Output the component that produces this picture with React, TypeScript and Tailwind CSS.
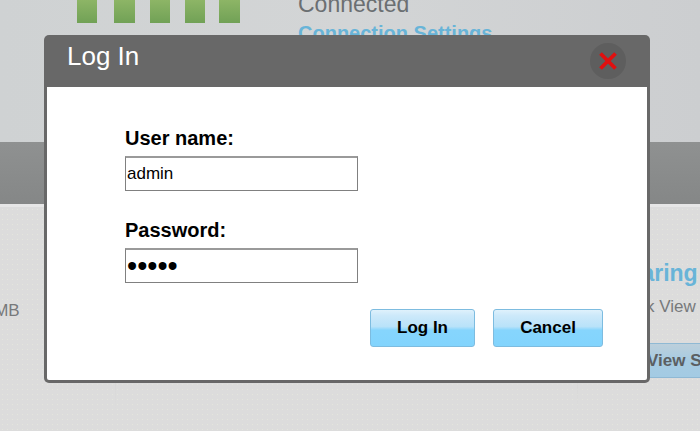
import React from "react";

const bars = [
  "w-[20px] mr-[17px]",
  "w-[21px] mr-[15px]",
  "w-[20px] mr-[15px]",
  "w-[20px] mr-[14px]",
  "w-[21px]",
];

const btn =
  "h-[38px] rounded-[3px] border border-[#7dbce0] bg-[linear-gradient(to_bottom,#dff1fc_0%,#cde9fa_15%,#b9e2f9_46%,#86d5fd_56%,#82d4fd_100%)] text-[17px] font-bold text-black";

export default function App() {
  return (
    <div className="relative w-[700px] h-[431px] overflow-hidden bg-[#dcdcdc] font-['Liberation_Sans',Arial,sans-serif]">
      <div className="flex flex-col h-full">
        <div className="h-[142px] shrink-0 flex bg-gradient-to-r from-[#cfd2d3] via-[#d3d5d6] to-[#ccced0]">
          <div className="ml-[77px] flex h-[23px]">
            {bars.map((w, i) => (
              <div key={i} className={`${w} h-[23px] bg-gradient-to-b from-[#8db566] to-[#71a156]`} />
            ))}
          </div>
          <div className="ml-[58px] -mt-[9px]">
            <div className="text-[23px] leading-[26px] text-[#6b6f72]">Connected</div>
            <div className="mt-[5px] text-[20px] leading-[23px] font-bold text-[#68b4d8] whitespace-nowrap">Connection Settings</div>
          </div>
        </div>
        <div className="h-[62px] shrink-0 bg-gradient-to-b from-[#8f9191] to-[#858787]" />
        <div className="h-[3px] shrink-0 bg-[#e6e6e6]" />
        <div className="flex-1 flex bg-[radial-gradient(#e4e6dc_0.7px,transparent_0.9px)] bg-[size:5px_5px]">
          <div className="w-[115px] shrink-0 pt-[94px] text-[17px] leading-[20px] text-[#77797b] overflow-hidden">
            <div className="-ml-[20px] whitespace-nowrap">1 MB</div>
          </div>
          <div className="w-px h-[205px] shrink-0 bg-gradient-to-b from-[#cfcfcf] via-[#cfcfcf] to-transparent" />
          <div className="w-[461px] shrink-0" />
          <div className="w-px h-[208px] shrink-0 bg-gradient-to-b from-[#cfcfcf] via-[#cfcfcf] to-transparent" />
          <div className="flex-1 min-w-0 overflow-hidden whitespace-nowrap">
            <div className="pt-[52px] ml-[34px] text-[23px] leading-[28px] font-bold text-[#68b4d8]">Sharing</div>
            <div className="mt-[10px] ml-[68px] text-[17px] leading-[20px] text-[#77797b]">k View</div>
            <div className="mt-[26px] ml-[40px] w-[200px] h-[35px] pl-[28px] border border-[#8fb9d4] bg-gradient-to-b from-[#bccfdb] via-[#a6cbe2] to-[#a3cbe3] text-[17px] leading-[33px] font-bold text-[#5b5f62]">
              View S
            </div>
          </div>
        </div>
      </div>

      <div className="absolute left-[44px] top-[35px] w-[606px] h-[348px] rounded-[5px] bg-[#686868] p-[3px] pt-0 flex flex-col">
        <div className="h-[52px] shrink-0 flex items-start justify-between">
          <div className="ml-[20px] mt-[5px] text-[26px] leading-[32px] text-white">Log In</div>
          <div className="mr-[21px] mt-[8px] w-[36px] h-[36px] rounded-full bg-[#5e5e5e] flex items-center justify-center">
            <svg width="20" height="20" viewBox="0 0 20 20">
              <path d="M2.5 2.5 L17.5 17.5 M17.5 2.5 L2.5 17.5" stroke="#e01010" strokeWidth="3.8" />
            </svg>
          </div>
        </div>
        <div className="flex-1 bg-white rounded-b-[2px] pl-[78px] pt-[39px] flex flex-col">
          <label className="block text-[20px] leading-[24px] font-bold text-black">User name:</label>
          <input
            readOnly
            value="admin"
            className="mt-[6px] w-[233px] h-[35px] pl-px border border-[#808080] border-t-2 border-t-[#9a9a9a] text-[17px] text-black outline-none"
          />
          <label className="block mt-[27px] text-[20px] leading-[24px] font-bold text-black">Password:</label>
          <input
            readOnly
            type="password"
            value="admin"
            className="mt-[6px] w-[233px] h-[35px] pl-px border border-[#808080] border-t-2 border-t-[#9a9a9a] text-[29px] leading-[29px] text-black outline-none"
          />
          <div className="mt-[26px] ml-[245px] flex gap-[18px]">
            <button className={`w-[105px] ${btn}`}>Log In</button>
            <button className={`w-[110px] ${btn}`}>Cancel</button>
          </div>
        </div>
      </div>
    </div>
  );
}
